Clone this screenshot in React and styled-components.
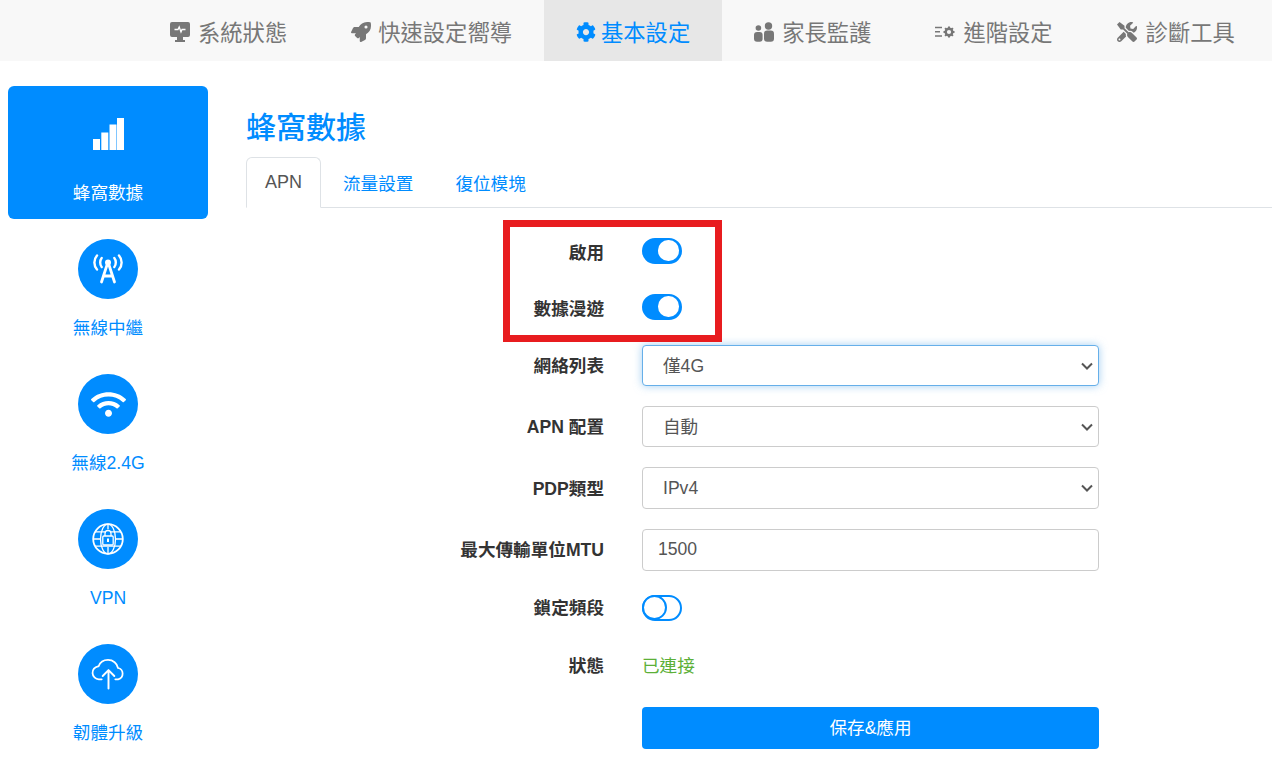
import React from 'react';
import styled, { createGlobalStyle } from 'styled-components';
import { FaCog, FaRocket, FaTools, FaWifi } from 'react-icons/fa';

const BLUE = '#008cff';

const CHEVRON =
  "data:image/svg+xml,%3Csvg xmlns='http://www.w3.org/2000/svg' width='12' height='8' viewBox='0 0 12 8'%3E%3Cpath d='M1 1.500l5 5 5-5' fill='none' stroke='%23555' stroke-width='2'/%3E%3C/svg%3E";

const GlobalStyle = createGlobalStyle`
  html, body {
    margin: 0;
    padding: 0;
    background: #fff;
    overflow: hidden;
  }
  body {
    font-family: "Liberation Sans", "Noto Sans CJK TC", sans-serif;
    font-size: 17.6px;
    color: #333;
  }
`;

const TopBar = styled.nav`
  display: flex;
  height: 61px;
  padding-left: 138px;
  background: #f8f8f8;
`;

const TopItem = styled.a`
  display: flex;
  align-items: center;
  gap: ${(p) => p.$gap}px;
  padding: 0 32px;
  font-size: 22.3px;
  color: ${(p) => (p.$active ? BLUE : '#777')};
  background: ${(p) => (p.$active ? '#e7e7e7' : 'transparent')};

  svg {
    width: 20px;
    height: 20px;
    flex: none;
    margin-top: 3px;
  }
`;

const Shell = styled.div`
  display: flex;
`;

const Sidebar = styled.aside`
  display: flex;
  flex-direction: column;
  gap: 2px;
  flex: none;
  width: 200px;
  padding: 25px 8px 0;
`;

const SideItem = styled.a`
  display: flex;
  flex-direction: column;
  align-items: center;
  height: 133px;
  padding-top: 18px;
  box-sizing: border-box;
  border-radius: 6px;
  color: ${(p) => (p.$active ? '#fff' : BLUE)};
  background: ${(p) => (p.$active ? BLUE : 'transparent')};
`;

const SideIcon = styled.span`
  display: flex;
  align-items: center;
  justify-content: center;
  width: 60px;
  height: 60px;
  border-radius: 50%;
  color: #fff;
  background: ${(p) => (p.$plain ? 'none' : BLUE)};
`;

const SideLabel = styled.span`
  margin-top: 17px;
  line-height: 24px;
`;

const Main = styled.main`
  flex: 1;
  margin-left: 30px;
  padding-top: 47px;
`;

const Title = styled.h1`
  margin: 0 0 9px;
  font-size: 30px;
  font-weight: 500;
  line-height: 40px;
  color: ${BLUE};
`;

const Tabs = styled.div`
  display: flex;
  gap: 4px;
  height: 51px;
  box-sizing: border-box;
  border-bottom: 1px solid #dee2e6;
`;

const Tab = styled.a`
  display: flex;
  align-items: center;
  height: 51px;
  padding: 0 18px;
  box-sizing: border-box;
  border: 1px solid ${(p) => (p.$active ? '#dee2e6' : 'transparent')};
  border-bottom-color: ${(p) => (p.$active ? '#fff' : 'transparent')};
  border-radius: 6px 6px 0 0;
  color: ${(p) => (p.$active ? '#555' : BLUE)};
  background: ${(p) => (p.$active ? '#fff' : 'transparent')};
  font-size: ${(p) => (p.$active ? '18px' : 'inherit')};
  margin-right: ${(p) => (p.$active ? '-1px' : '0')};
`;

const Form = styled.form`
  position: relative;
  display: flex;
  flex-direction: column;
  gap: 20px;
  padding-top: 25px;
`;

const Row = styled.div`
  display: grid;
  grid-template-columns: 358px 457px;
  column-gap: 38px;
  align-items: center;
  height: ${(p) => p.$h}px;
`;

const Label = styled.label`
  padding-bottom: ${(p) => p.$lift || 0}px;
  font-weight: 700;
  text-align: right;
  color: #333;
`;

const Toggle = styled.span`
  position: relative;
  display: block;
  width: 40px;
  height: 25.5px;
  box-sizing: border-box;
  border: 2.5px solid ${BLUE};
  border-radius: 13px;
  background: ${(p) => (p.$on ? BLUE : '#fff')};

  &::after {
    content: '';
    position: absolute;
    box-sizing: border-box;
    border-radius: 50%;
    background: #fff;
    top: ${(p) => (p.$on ? '0' : '-2.5px')};
    left: ${(p) => (p.$on ? '14px' : '-2.5px')};
    width: ${(p) => (p.$on ? '20.5px' : '25.5px')};
    height: ${(p) => (p.$on ? '20.5px' : '25.5px')};
    border: ${(p) => (p.$on ? 'none' : `2.5px solid ${BLUE}`)};
  }
`;

const Select = styled.select`
  width: 100%;
  height: 100%;
  padding: 0 24px 0 20px;
  box-sizing: border-box;
  appearance: none;
  font: inherit;
  color: #555;
  background: #fff url("${CHEVRON}") no-repeat right 5px center;
  border: 1px solid ${(p) => (p.$focused ? '#66afe9' : '#ccc')};
  border-radius: 4px;
  box-shadow: ${(p) => (p.$focused ? '0 0 8px rgba(102, 175, 233, 0.6)' : 'none')};
  outline: none;
`;

const Input = styled.input`
  width: 100%;
  height: 100%;
  padding: 0 15px 2px;
  box-sizing: border-box;
  font: inherit;
  color: #555;
  background: #fff;
  border: 1px solid #ccc;
  border-radius: 4px;
  outline: none;
`;

const Status = styled.span`
  padding-bottom: 4px;
  color: #5cb038;
`;

const SaveButton = styled.button`
  width: 100%;
  height: 42px;
  padding: 0 0 4px;
  font: inherit;
  color: #fff;
  background: ${BLUE};
  border: none;
  border-radius: 4px;
`;

const Highlight = styled.div`
  position: absolute;
  top: 12px;
  left: 257px;
  width: 219px;
  height: 122px;
  box-sizing: border-box;
  border: 7.5px solid #e81c1f;
  pointer-events: none;
`;

const MonitorIcon = () => (
  <svg viewBox="0 0 20 20">
    <path fill="currentColor" d="M2 0h16a2 2 0 0 1 2 2v11a2 2 0 0 1-2 2h-5v3h2v2H5v-2h2v-3H2a2 2 0 0 1-2-2V2a2 2 0 0 1 2-2z" />
    <path fill="none" stroke="#fff" strokeWidth="1.3" d="M4.500 7.500h3.500l1.200-2.500 1.800 5 1-2.500h3.500" />
  </svg>
);

const FamilyIcon = () => (
  <svg viewBox="0 0 20 20">
    <g fill="currentColor">
      <circle cx="4.400" cy="6" r="2.800" />
      <rect x="0" y="10" width="8.600" height="9.800" rx="3" />
      <circle cx="14.500" cy="4" r="3.700" />
      <rect x="10" y="8.500" width="10" height="11.300" rx="3.200" />
    </g>
  </svg>
);

const AdvancedIcon = () => (
  <svg viewBox="0 0 20 20">
    <g stroke="currentColor" strokeWidth="1.5">
      <path d="M0 5.500h7M0 9.800h5M0 14h7" />
      <circle cx="14" cy="10" r="3.300" fill="none" strokeWidth="2.400" />
      <path strokeWidth="2" d="M14 4.500v2.400M14 13.100v2.400M8.500 10h2.400M17.100 10h2.400M10.100 6.100l1.700 1.700M16.200 12.200l1.700 1.700M10.100 13.900l1.700-1.700M16.200 7.800l1.700-1.700" />
    </g>
  </svg>
);

const SignalIcon = () => (
  <svg width="32" height="32" viewBox="0 0 32 32" fill="currentColor">
    <rect x="1" y="21" width="7" height="11" />
    <rect x="9.300" y="14.500" width="7" height="17.500" />
    <rect x="17.500" y="6.500" width="7" height="25.500" />
    <rect x="25" y="0" width="7" height="32" />
  </svg>
);

const TowerIcon = () => (
  <svg width="32" height="32" viewBox="0 0 32 32" fill="none" stroke="currentColor" strokeWidth="2.400" strokeLinecap="round">
    <circle cx="16" cy="9.500" r="3" fill="currentColor" stroke="none" />
    <path strokeWidth="2.800" d="M15 12 9.500 29M17 12l5.500 17M12 23h8" />
    <path d="M9.700 5c-2 2.500-2 6.500 0 9M22.300 5c2 2.500 2 6.500 0 9" />
    <path d="M5 2.500c-3.500 4-3.500 10 0 14M27 2.500c3.500 4 3.500 10 0 14" />
  </svg>
);

const GlobeIcon = () => (
  <svg width="32" height="32" viewBox="0 0 32 32" fill="none" stroke="currentColor" strokeWidth="1.300">
    <circle cx="16" cy="16" r="14.800" strokeWidth="1.800" />
    <ellipse cx="16" cy="16" rx="7.500" ry="14.800" />
    <path d="M16 1.200v5M16 24v6.800M3.200 8.800h25.600M3.200 23.200h25.600M1.200 16h7.300M23.500 16h7.300" />
    <path d="M13 13v-2.500a3 3 0 0 1 6 0V13" fill="#008cff" />
    <rect x="10.800" y="13" width="10.400" height="9" rx="1" fill="#008cff" />
    <rect x="15" y="15.500" width="2" height="3.500" fill="currentColor" stroke="none" />
  </svg>
);

const CloudIcon = () => (
  <svg width="35" height="31" viewBox="0 0 36 32" fill="none" stroke="currentColor" strokeWidth="1.800" strokeLinecap="round" strokeLinejoin="round">
    <path d="M11 21H8A6.800 6.800 0 0 1 7.200 7.500h.6C9.300 3.400 13.200 1 17.500 1c5.200 0 9.500 3.500 10.300 8.300A6 6 0 0 1 28 21h-3" />
    <path strokeWidth="2" d="M18 30.500V12M12 17.500l6-6 6 6" />
  </svg>
);

const topItems = [
  { label: '系統狀態', icon: <MonitorIcon />, gap: 8 },
  { label: '快速設定嚮導', icon: <FaRocket />, gap: 7 },
  { label: '基本設定', icon: <FaCog />, gap: 5 },
  { label: '家長監護', icon: <FamilyIcon />, gap: 8 },
  { label: '進階設定', icon: <AdvancedIcon />, gap: 8 },
  { label: '診斷工具', icon: <FaTools />, gap: 9 },
];

const sideItems = [
  { label: '無線中繼', icon: <TowerIcon /> },
  { label: '無線2.4G', icon: <FaWifi size={35} /> },
  { label: 'VPN', icon: <GlobeIcon /> },
  { label: '韌體升級', icon: <CloudIcon /> },
];

export default function App() {
  return (
    <>
      <GlobalStyle />
      <TopBar>
        {topItems.map((item) => (
          <TopItem key={item.label} $active={item.label === '基本設定'} $gap={item.gap}>
            {item.icon}
            {item.label}
          </TopItem>
        ))}
      </TopBar>
      <Shell>
        <Sidebar>
          <SideItem $active>
            <SideIcon $plain>
              <SignalIcon />
            </SideIcon>
            <SideLabel>蜂窩數據</SideLabel>
          </SideItem>
          {sideItems.map((item) => (
            <SideItem key={item.label}>
              <SideIcon>{item.icon}</SideIcon>
              <SideLabel>{item.label}</SideLabel>
            </SideItem>
          ))}
        </Sidebar>
        <Main>
          <Title>蜂窩數據</Title>
          <Tabs>
            <Tab $active>APN</Tab>
            <Tab>流量設置</Tab>
            <Tab>復位模塊</Tab>
          </Tabs>
          <Form>
            <Row $h={36}>
              <Label>啟用</Label>
              <Toggle $on />
            </Row>
            <Row $h={36}>
              <Label>數據漫遊</Label>
              <Toggle $on />
            </Row>
            <Row $h={41}>
              <Label $lift={2}>網絡列表</Label>
              <Select $focused defaultValue="4g">
                <option value="4g">僅4G</option>
              </Select>
            </Row>
            <Row $h={41}>
              <Label $lift={2}>APN 配置</Label>
              <Select defaultValue="auto">
                <option value="auto">自動</option>
              </Select>
            </Row>
            <Row $h={42}>
              <Label $lift={2}>PDP類型</Label>
              <Select defaultValue="ipv4">
                <option value="ipv4">IPv4</option>
              </Select>
            </Row>
            <Row $h={42}>
              <Label $lift={4}>最大傳輸單位MTU</Label>
              <Input defaultValue="1500" />
            </Row>
            <Row $h={34}>
              <Label $lift={4}>鎖定頻段</Label>
              <Toggle />
            </Row>
            <Row $h={42}>
              <Label $lift={4}>狀態</Label>
              <Status>已連接</Status>
            </Row>
            <Row $h={42}>
              <span />
              <SaveButton type="button">保存&應用</SaveButton>
            </Row>
            <Highlight />
          </Form>
        </Main>
      </Shell>
    </>
  );
}
